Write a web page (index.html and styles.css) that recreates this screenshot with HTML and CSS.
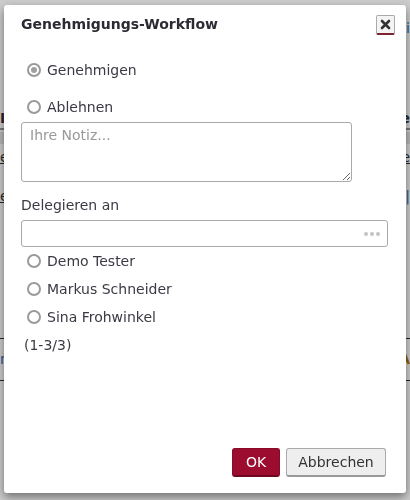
FILE: index.html
```html
<!DOCTYPE html>
<html lang="de">
<head>
<meta charset="utf-8">
<title>Genehmigungs-Workflow</title>
<link rel="stylesheet" href="styles.css">
</head>
<body>
<div class="page">
  <div class="page-top"><span></span><span class="pg-link">i</span></div>
  <div class="page-head"><span>I</span><span>e</span></div>
  <div class="page-band"></div>
  <div class="page-row"><span class="pg-u">e</span><span class="pg-u">e</span></div>
  <div class="page-row2"><span class="pg-u">e</span><span class="pg-link">|</span></div>
  <div class="page-foot"><span class="pg-link">n</span><span class="pg-warn">A</span></div>
</div>
<div class="overlay"></div>
<div class="dialog" role="dialog" aria-labelledby="dlg-title">
  <div class="dlg-head">
    <h1 id="dlg-title" class="dlg-title">Genehmigungs-Workflow</h1>
    <button class="dlg-close" type="button" aria-label="Schließen">
      <svg width="11" height="11" viewBox="0 0 11 11"><path d="M2 2 L9 9 M9 2 L2 9" stroke="#333" stroke-width="2.6" stroke-linecap="round"/></svg>
    </button>
  </div>
  <div class="dlg-body">
    <label class="radio-row first"><span class="radio checked"></span><span class="radio-label">Genehmigen</span></label>
    <label class="radio-row second"><span class="radio"></span><span class="radio-label">Ablehnen</span></label>
    <textarea class="note" placeholder="Ihre Notiz..."></textarea>
    <div class="field-label">Delegieren an</div>
    <div class="picker"><span class="dots"><i></i><i></i><i></i></span></div>
    <div class="options">
      <label class="opt"><span class="radio"></span><span class="radio-label">Demo Tester</span></label>
      <label class="opt"><span class="radio"></span><span class="radio-label">Markus Schneider</span></label>
      <label class="opt"><span class="radio"></span><span class="radio-label">Sina Frohwinkel</span></label>
    </div>
    <div class="count">(1-3/3)</div>
  </div>
  <div class="dlg-foot">
    <button class="btn btn-ok" type="button">OK</button>
    <button class="btn btn-cancel" type="button">Abbrechen</button>
  </div>
</div>
</body>
</html>
```

FILE: styles.css
```css
html, body {
  margin: 0;
  padding: 0;
  height: 100%;
}
body {
  font-family: "DejaVu Sans", "Liberation Sans", sans-serif;
  font-size: 14px;
  color: #333;
  background: #fff;
  overflow: hidden;
}

/* background page */
.page {
  width: 410px;
}
.page-top {
  display: flex;
  justify-content: space-between;
  padding: 20px 0 0 0;
  height: 100px;
  box-sizing: border-box;
}
.pg-link { color: #2a6ebb; }
.pg-warn { color: #c07a00; font-weight: bold; }
.pg-u { text-decoration: underline; color: #333; }
.page-head {
  display: flex;
  justify-content: space-between;
  font-weight: bold;
  height: 30px;
  padding-top: 10px;
  box-sizing: border-box;
  border-bottom: 2px solid #999;
}
.page-band {
  height: 12px;
  margin-top: 2px;
  background: #e6e6e6;
}
.page-row {
  display: flex;
  justify-content: space-between;
  height: 40px;
  padding-top: 5px;
  box-sizing: border-box;
}
.page-row2 {
  display: flex;
  justify-content: space-between;
  height: 155px;
  padding-top: 4px;
  box-sizing: border-box;
  border-bottom: 1px solid #333;
}
.page-foot {
  display: flex;
  justify-content: space-between;
  height: 42px;
  padding-top: 12px;
  box-sizing: border-box;
  border-bottom: 1px solid #333;
}

.overlay {
  position: fixed;
  inset: 0;
  background: rgba(0, 0, 0, 0.2);
}

/* dialog */
.dialog {
  position: absolute;
  left: 4px;
  top: 5px;
  width: 402px;
  height: 488px;
  background: #fff;
  border-radius: 3px;
  box-shadow: 0 4px 10px rgba(0, 0, 0, 0.45);
  display: flex;
  flex-direction: column;
  box-sizing: border-box;
}
.dlg-head {
  display: flex;
  justify-content: space-between;
  align-items: flex-start;
  padding: 9px 11px 0 17px;
}
.dlg-title {
  margin: 0;
  font-size: 14px;
  font-weight: bold;
  line-height: 20px;
  color: #2b2b33;
}
.dlg-close {
  margin-top: 1px;
  width: 19px;
  height: 20px;
  padding: 0;
  display: flex;
  align-items: center;
  justify-content: center;
  background: #f4f4f4;
  border: 1px solid #aaa;
  border-bottom: 2px solid #7b2430;
  border-radius: 2px;
  box-sizing: border-box;
}

.dlg-body {
  flex: 1;
  padding: 0 0 0 17px;
  display: flex;
  flex-direction: column;
  align-items: flex-start;
}
.radio-row, .opt {
  display: flex;
  align-items: center;
  line-height: 20px;
  height: 20px;
  padding-left: 6px;
}
.radio-row.first { margin-top: 25px; }
.radio-row.second { margin-top: 17px; }
.radio {
  width: 14px;
  height: 14px;
  box-sizing: border-box;
  border: 2px solid #9a9a9a;
  border-radius: 50%;
  margin-right: 6px;
  display: flex;
  align-items: center;
  justify-content: center;
  flex: none;
}
.radio.checked::after {
  content: "";
  width: 6px;
  height: 6px;
  border-radius: 50%;
  background: #a0a0a0;
}
.radio-label { color: #3a3a44; }

.note {
  margin: 5px 0 0 0;
  width: 331px;
  height: 60px;
  box-sizing: border-box;
  border: 1px solid #a9a9a9;
  border-radius: 3px;
  padding: 2px 8px;
  font-family: "DejaVu Sans", "Liberation Sans", sans-serif;
  font-size: 14px;
  line-height: 20px;
  color: #333;
  resize: both;
}
.note::placeholder { color: #999; }

.field-label {
  margin-top: 13px;
  line-height: 20px;
  color: #3a3a44;
}
.picker {
  margin-top: 5px;
  width: 367px;
  height: 27px;
  box-sizing: border-box;
  border: 1px solid #a9a9a9;
  border-radius: 3px;
  display: flex;
  align-items: center;
  justify-content: flex-end;
  padding-right: 7px;
}
.dots {
  display: flex;
  gap: 2px;
}
.dots i {
  width: 4px;
  height: 4px;
  border-radius: 50%;
  background: #c4c4c4;
}
.options {
  display: flex;
  flex-direction: column;
}
.opt {
  height: 28px;
}
.count {
  margin: 4px 0 0 3px;
  line-height: 20px;
  color: #3a3a44;
}

.dlg-foot {
  display: flex;
  justify-content: flex-end;
  gap: 6px;
  padding: 0 20px 16px 0;
}
.btn {
  height: 29px;
  box-sizing: border-box;
  font-family: "DejaVu Sans", "Liberation Sans", sans-serif;
  font-size: 14px;
  border-radius: 3px;
  padding: 0;
}
.btn-ok {
  width: 48px;
  background: #9b0c2f;
  color: #fff;
  border: 1px solid #8a0a29;
  border-bottom: 2px solid #6e0820;
}
.btn-cancel {
  width: 100px;
  background: #eee;
  color: #333;
  border: 1px solid #aaa;
  border-bottom: 2px solid #999;
}
```
